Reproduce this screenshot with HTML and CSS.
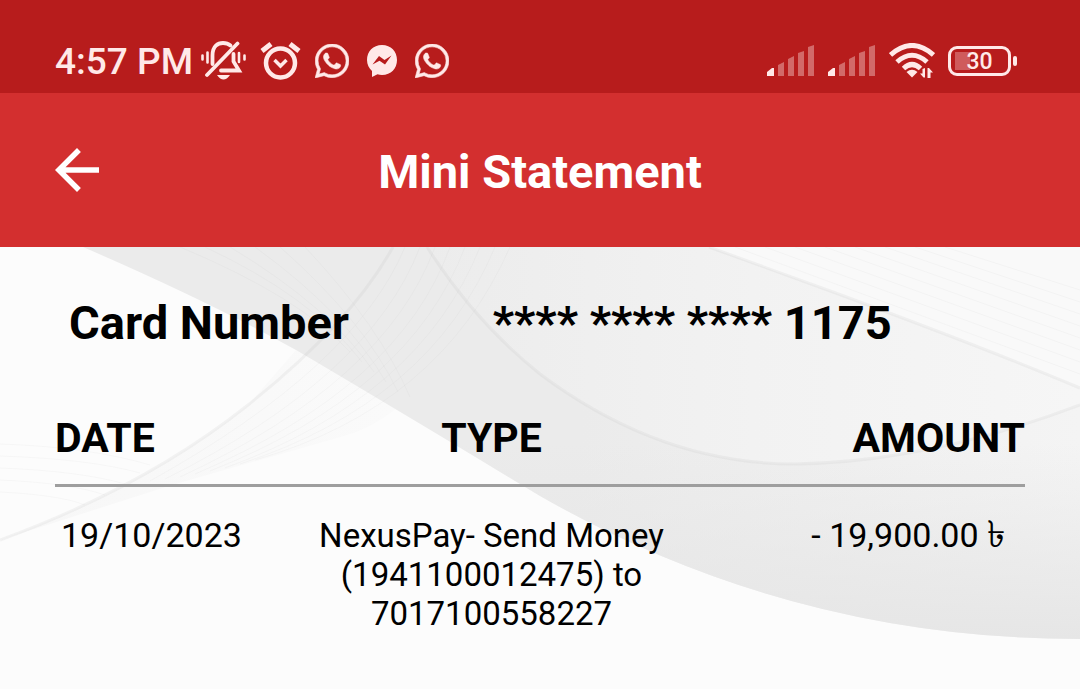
FILE: index.html
```html
<!DOCTYPE html>
<html lang="en">
<head>
<meta charset="utf-8">
<meta name="viewport" content="width=device-width, initial-scale=1">
<title>Mini Statement</title>
<link rel="stylesheet" href="styles.css">
</head>
<body>
<svg width="0" height="0" class="symbols" aria-hidden="true">
  <symbol id="whatsapp" viewBox="0 0 24 24"><path stroke="currentColor" stroke-width=".4" d="M17.472 14.382c-.297-.149-1.758-.867-2.03-.967-.273-.099-.471-.148-.67.15-.197.297-.767.966-.94 1.164-.173.199-.347.223-.644.075-.297-.15-1.255-.463-2.39-1.475-.883-.788-1.48-1.761-1.653-2.059-.173-.297-.018-.458.13-.606.134-.133.298-.347.446-.52.149-.174.198-.298.298-.497.099-.198.05-.371-.025-.52-.075-.149-.669-1.612-.916-2.207-.242-.579-.487-.5-.669-.51-.173-.008-.371-.01-.57-.01-.198 0-.52.074-.792.372-.272.297-1.04 1.016-1.04 2.479 0 1.462 1.065 2.875 1.213 3.074.149.198 2.096 3.2 5.077 4.487.709.306 1.262.489 1.694.625.712.227 1.36.195 1.871.118.571-.085 1.758-.719 2.006-1.413.248-.694.248-1.289.173-1.413-.074-.124-.272-.198-.57-.347m-5.421 7.403h-.004a9.87 9.87 0 01-5.031-1.378l-.361-.214-3.741.982.998-3.648-.235-.374a9.86 9.86 0 01-1.51-5.26c.001-5.45 4.436-9.884 9.888-9.884 2.64 0 5.122 1.03 6.988 2.898a9.825 9.825 0 012.893 6.994c-.003 5.45-4.437 9.884-9.885 9.884m8.413-18.297A11.815 11.815 0 0012.05 0C5.495 0 .16 5.335.157 11.892c0 2.096.547 4.142 1.588 5.945L.057 24l6.305-1.654a11.882 11.882 0 005.683 1.448h.005c6.554 0 11.89-5.335 11.893-11.893a11.821 11.821 0 00-3.48-8.413z"/></symbol>
  <symbol id="signal" viewBox="0 0 48 32">
    <path d="M0 31V27L5 23H7V31Z"/>
    <g opacity=".38"><path d="M11 31V20L17 17V31ZM21 31V14L27 11V31ZM31 31V8L37 6V31ZM41 31V2L47 0V31Z"/></g>
  </symbol>
</svg>

<div class="status">
  <div class="status-group">
    <time class="clock">4:57 PM</time>
    <svg class="bell" viewBox="0 0 45 40" role="img" aria-label="Silent">
      <g fill="none" stroke="currentColor" stroke-linecap="round">
        <path d="M1.500 14.500v4M6.500 11.500v10M38 12v9M43.500 14.500v4" stroke-width="2.600"/>
        <path d="M11.500 23V14.500C11.500 5 17 2 22 2Q26.500 2 29.500 4.500M32.500 13V20.500L38 29.500H20" stroke-width="3.800"/>
        <path d="M6 34L36.500 2.500" stroke-width="3.800"/>
      </g>
      <path d="M16 34H29Q22.500 43 16 34Z"/>
    </svg>
    <svg class="alarm" viewBox="0 0 41 38" role="img" aria-label="Alarm">
      <g fill="none" stroke="currentColor">
        <circle cx="20.500" cy="21" r="14.500" stroke-width="4.500"/>
        <path d="M2 9L11 2M39 9L30 2" stroke-width="5"/>
        <path d="M14.500 18L20.500 24L26.500 18" stroke-width="3.500"/>
      </g>
    </svg>
    <svg class="chat" role="img" aria-label="WhatsApp"><use href="#whatsapp"/></svg>
    <svg class="messenger" viewBox="0 0 32 34" role="img" aria-label="Messenger">
      <path d="M16 1C7 1 1 7.500 1 16C1 20.500 3 24.500 6 27V33L11.500 30.200Q13.500 31 16 31C25 31 31 24.500 31 16S25 1 16 1Z"/>
      <path class="bolt" d="M6.500 20.500L13 12L18.500 16L25.500 11.500L19 20.500L13.500 16.800Z"/>
    </svg>
    <svg class="chat" role="img" aria-label="WhatsApp"><use href="#whatsapp"/></svg>
  </div>
  <div class="status-group system">
    <svg class="signal" role="img" aria-label="Signal, SIM 1"><use href="#signal"/></svg>
    <svg class="signal" role="img" aria-label="Signal, SIM 2"><use href="#signal"/></svg>
    <svg class="wifi" viewBox="0 0 46 36" role="img" aria-label="Wi-Fi">
      <g fill="none" stroke="currentColor" stroke-width="5">
        <path d="M1.500 12Q23 -7 44.500 12"/>
        <path d="M8 19Q23 5.500 38 19"/>
        <path d="M14.500 25.500Q23 17.500 31.500 25.500"/>
      </g>
      <path d="M17.500 29Q23 24.500 28.500 29L23 34.500Z"/>
      <path d="M36 25V34.500H34.500L31 30.500H33.500V26ZM38.500 35V25H40L44 29.500H41.500V35Z"/>
    </svg>
    <div class="battery"><span class="battery-level">30</span></div>
  </div>
</div>

<header class="app-bar">
  <button class="back" type="button" aria-label="Back">
    <svg viewBox="4 4 16 16"><path d="M20 11H7.830l5.590-5.590L12 4l-8 8 8 8 1.410-1.410L7.830 13H20v-2z"/></svg>
  </button>
  <h1>Mini Statement</h1>
</header>

<main class="statement">
  <svg class="waves" viewBox="0 0 1080 442" preserveAspectRatio="none" aria-hidden="true">
    <defs>
      <linearGradient id="band" x1="0" y1="0" x2="1" y2="0">
        <stop offset="0" stop-color="#ebebeb"/><stop offset=".5" stop-color="#ebebeb"/><stop offset="1" stop-color="#f4f4f4"/>
      </linearGradient>
      <linearGradient id="edge" x1="0" y1="0" x2="0" y2="1">
        <stop offset=".5" stop-color="#e6e6e6" stop-opacity="0"/><stop offset="1" stop-color="#e6e6e6"/>
      </linearGradient>
      <linearGradient id="bowl" x1="0" y1="0" x2="1" y2="0">
        <stop offset="0" stop-color="#ececec"/><stop offset=".5" stop-color="#f2f2f2"/><stop offset="1" stop-color="#f6f6f6"/>
      </linearGradient>
      <linearGradient id="veil" x1="0" y1="0" x2="1" y2="0">
        <stop offset="0" stop-color="#f7f7f7"/><stop offset="1" stop-color="#fafafa"/>
      </linearGradient>
    </defs>
    <path fill="url(#veil)" d="M0 293Q145 240 248 158L296 103L396 162Q370 182 344 189L172 238Z"/>
    <path fill="url(#band)" d="M83 0Q210 55 296 103Q396 162 540 249Q790 392 1080 392V0Z"/>
    <path fill="url(#edge)" d="M83 0Q210 55 296 103Q396 162 540 249Q790 392 1080 392V0Z"/>
    <path fill="url(#bowl)" d="M427 0Q475 75 540 127Q660 217 795 217Q930 215 1080 158V0Z"/>
    <path fill="#f9f9f9" d="M709 0L833 45Q990 103 1080 141V0Z"/>
    <g fill="none" stroke="#b0b0b0" stroke-opacity=".13" stroke-width="3">
      <path d="M0 293Q145 240 248 158T393 0"/>
      <path d="M427 0Q475 75 540 127Q660 217 795 217Q930 215 1080 158"/>
      <path d="M709 0L833 45Q990 103 1080 141"/>
    </g>
    <g fill="none" stroke="#aaa" stroke-opacity=".07">
      <path d="M180 0Q300 50 350 105M205 0Q312 50 362 115M230 0Q330 60 374 125M255 0Q345 65 386 135M280 0Q365 75 398 145M305 0Q380 80 410 150"/>
      <path d="M405 0Q355 120 150 234M420 0Q370 130 165 232M435 0Q385 135 180 230M450 0Q400 140 195 227M465 0Q410 145 210 224M480 0Q420 150 225 221M495 0Q430 155 240 217M510 0Q440 160 255 213"/>
      <path d="M735 0L1080 127M765 0L1080 115M795 0L1080 103M825 0L1080 91M855 0L1080 79M885 0L1080 67M915 0L1080 55M945 0L1080 43"/>
      <path d="M0 197Q90 200 150 218M0 209Q90 212 140 226M0 221Q80 224 125 237M0 233Q70 236 105 248M0 245Q60 248 85 258"/>
    </g>
  </svg>

  <dl class="card-number">
    <dt>Card Number</dt>
    <dd>**** **** **** 1175</dd>
  </dl>

  <table class="entries">
    <thead>
      <tr><th class="date" scope="col">DATE</th><th class="type" scope="col">TYPE</th><th class="amount" scope="col">AMOUNT</th></tr>
    </thead>
    <tbody>
      <tr>
        <td class="date">19/10/2023</td>
        <td class="type">NexusPay- Send Money (1941100012475) to 7017100558227</td>
        <td class="amount">- 19,900.00 <span class="taka">৳</span></td>
      </tr>
    </tbody>
  </table>
</main>
</body>
</html>
```
FILE: styles.css
```css
* { box-sizing: border-box; }

body {
  margin: 0;
  min-height: 100vh;
  display: flex;
  flex-direction: column;
  background: #fcfcfc;
  color: #000;
  font-family: Roboto, "Noto Sans", sans-serif;
}

svg { display: block; fill: currentColor; flex: none; }
.symbols { position: absolute; }

.status {
  display: flex;
  justify-content: space-between;
  align-items: center;
  padding: 36px 63px 8px 55px;
  background: #b71c1c;
  color: #ffe9e8;
}
.status-group { display: flex; align-items: center; gap: 14px; }
.status-group.system { gap: 13px; }
.clock { padding-top: 2px; font-size: 37px; font-weight: 500; line-height: 47px; margin-right: -6px; }
.bell { width: 45px; height: 40px; }
.alarm { width: 41px; height: 38px; }
.chat { width: 34px; height: 34px; overflow: visible; }
.messenger { width: 32px; height: 34px; margin: 0 3px; }
.bolt { fill: #b71c1c; }
.signal { width: 48px; height: 32px; }
.wifi { width: 46px; height: 36px; }

.battery {
  position: relative;
  width: 63px;
  height: 30px;
  margin-right: 6px;
  border: 3px solid currentColor;
  border-radius: 9px;
  background: linear-gradient(#cf5b5c, #cf5b5c) 4px 3px / 15px 18px no-repeat;
}
.battery::after {
  content: "";
  position: absolute;
  top: 7px;
  right: -9px;
  width: 4px;
  height: 10px;
  border-radius: 2px;
  background: currentColor;
}
.battery-level { display: block; text-align: center; font-size: 23px; font-weight: 500; line-height: 25px; }

.app-bar {
  display: grid;
  grid-template-columns: 44px 1fr 44px;
  align-items: center;
  padding: 45px 55px;
  background: #d32f2f;
  color: #fff;
}
.back { padding: 0; border: 0; background: none; color: inherit; }
.back svg { width: 44px; height: 44px; }
h1 { margin: 0; padding-top: 4px; font-size: 47px; font-weight: 700; line-height: 60px; text-align: center; }

.statement { position: relative; flex: 1; padding: 46px 55px 24px; }
.waves { position: absolute; inset: 0; width: 100%; height: 100%; }

.card-number {
  position: relative;
  display: grid;
  grid-template-columns: 44% 1fr;
  margin: 0 0 53px;
  padding-left: 14px;
  font-size: 47px;
  font-weight: 700;
  line-height: 60px;
}
.card-number dd { margin: 0; padding-left: 3px; }

.entries { position: relative; width: 100%; table-layout: fixed; border-collapse: collapse; }
.entries th { padding: 8px 0 22px; border-bottom: 3px solid #9e9e9e; font-size: 41px; line-height: 48px; font-weight: 700; }
.entries td { padding: 29px 0 0; font-size: 34px; line-height: 39px; vertical-align: top; }
.entries .date { width: 25%; text-align: left; }
.entries .type { width: 40%; text-align: center; }
.entries .amount { width: 35%; text-align: right; }
.entries td.date { padding-left: 6px; }
.entries td.type { padding-left: 16px; padding-right: 16px; font-size: 33px; }
.entries td.amount { padding-right: 20px; }
.taka { font-size: 37px; line-height: 0; }
```
